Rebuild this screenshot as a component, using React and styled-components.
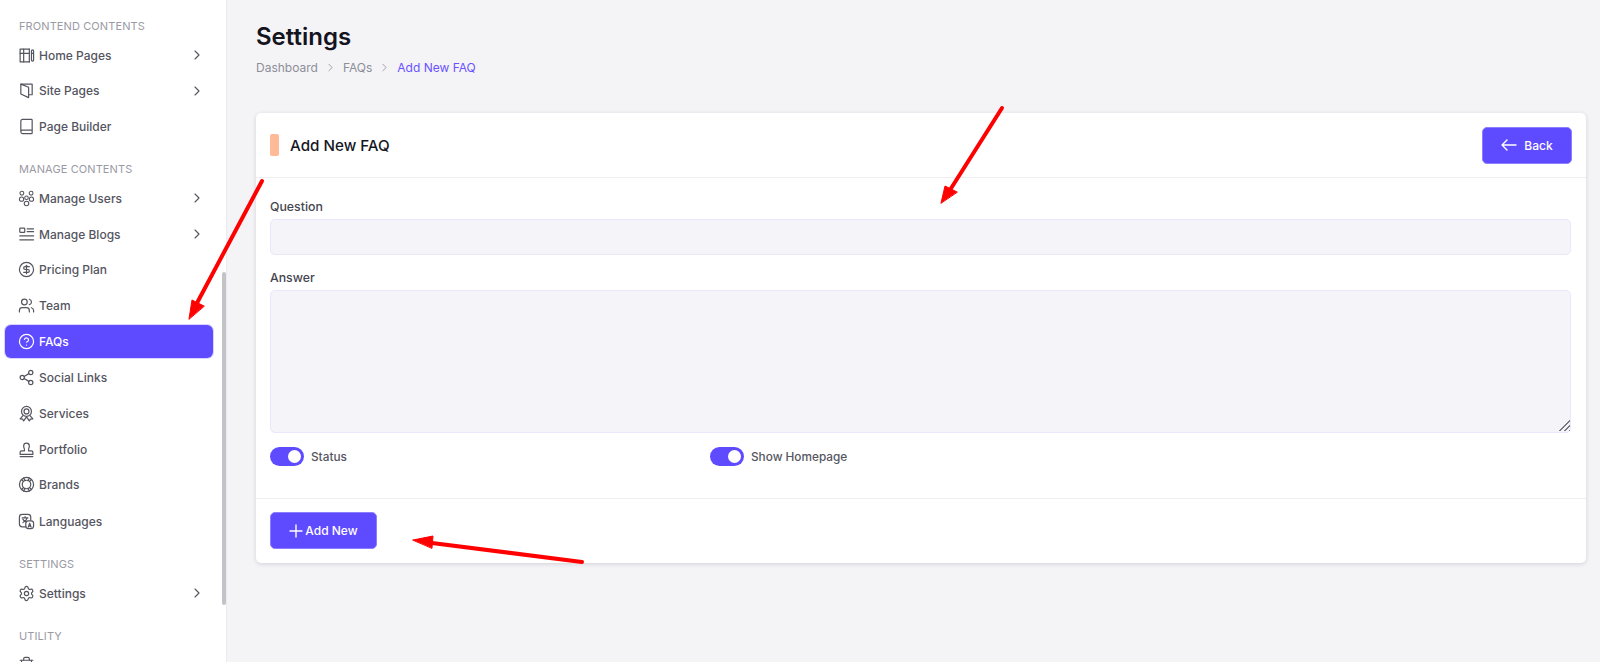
import React from 'react'
import styled, { createGlobalStyle } from 'styled-components'
import {
  ChevronRight, Book, CircleDollarSign, Users, CircleHelp, Share2, Settings as Gear, Trash2
} from 'lucide-react'

const GlobalStyle = createGlobalStyle`
  html, body { margin: 0; height: 100%; }
  body {
    background: #f4f4f7;
    font-family: Inter, "Liberation Sans", sans-serif;
    overflow: hidden;
  }
  * { box-sizing: border-box; }
`

const Page = styled.div`
  position: relative;
  display: flex;
  width: 1600px;
  height: 662px;
  overflow: hidden;
`

const Sidebar = styled.aside`
  position: relative;
  flex: 0 0 227px;
  height: 662px;
  padding: 19px 13px 0 5px;
  background: #fff;
  border-right: 1px solid #eaeaef;
  overflow: hidden;
`

const ScrollThumb = styled.div`
  position: absolute;
  top: 272px;
  right: 0;
  width: 4px;
  height: 333px;
  border-radius: 2px;
  background: #c2c2c9;
`

const SectionTitle = styled.div`
  height: 14px;
  margin: ${props => props.$first ? '0' : '19px'} 0 5.5px 14px;
  font-size: 11px;
  line-height: 14px;
  color: #9a9aa5;
  letter-spacing: 0.1px;
`

const Item = styled.div`
  display: flex;
  align-items: center;
  height: 33px;
  margin-bottom: ${props => props.$loose ? '3.85px' : '2.85px'};
  padding: 0 8px 0 13px;
  border-radius: 6px;
  font-size: 12px;
  font-weight: 500;
  color: ${props => props.$active ? '#fff' : '#55555f'};
  background: ${props => props.$active ? '#5f4bff' : 'transparent'};
  box-shadow: ${props => props.$active ? '0 0 0 1px #d9d4ff' : 'none'};
`

const ItemIcon = styled.span`
  display: flex;
  flex: 0 0 21px;
  svg { display: block; }
`

const ItemLabel = styled.span`
  flex: 1;
`

const Main = styled.main`
  flex: 1;
  padding: 22px 14px 0 29px;
`

const PageTitle = styled.h1`
  margin: 0;
  font-size: 24px;
  line-height: 30px;
  font-weight: 600;
  color: #14141f;
`

const Breadcrumb = styled.nav`
  display: flex;
  align-items: center;
  gap: 6px;
  height: 20px;
  margin-top: 5px;
  font-size: 12px;
  color: #8e8e98;
`

const CrumbCurrent = styled.span`
  color: #6a52ff;
`

const Card = styled.section`
  margin-top: 36px;
  height: 450px;
  display: flex;
  flex-direction: column;
  background: #fff;
  border-radius: 5px;
  box-shadow: 0 1px 4px rgba(30, 30, 50, 0.16);
`

const CardHeader = styled.header`
  display: flex;
  align-items: center;
  height: 65px;
  padding: 0 14px;
  border-bottom: 1px solid #eeeef2;
`

const TitleMark = styled.span`
  width: 9px;
  height: 22px;
  margin-right: 11px;
  border-radius: 2px;
  background: #ffbb98;
`

const CardTitle = styled.h2`
  flex: 1;
  margin: 0;
  font-size: 15.2px;
  font-weight: 500;
  color: #16161f;
`

const Button = styled.button`
  display: flex;
  align-items: center;
  justify-content: center;
  gap: ${props => props.$gap}px;
  width: ${props => props.$width}px;
  height: 37px;
  padding: 0;
  border: 1px solid #8d7dff;
  border-radius: 5px;
  background: #5f4bff;
  color: #fff;
  font: 500 12px Inter, "Liberation Sans", sans-serif;
`

const CardBody = styled.div`
  flex: 1;
  padding: 21px 15px 0 14px;
`

const FieldLabel = styled.label`
  display: block;
  height: 15px;
  margin-bottom: 5px;
  font-size: 12.3px;
  line-height: 15px;
  font-weight: 500;
  color: #45454f;
`

const TextInput = styled.input`
  display: block;
  width: 100%;
  height: 36px;
  margin-bottom: 15px;
  border: 1px solid #e9e7fb;
  border-radius: 5px;
  background: #f5f5f9;
`

const AreaWrap = styled.div`
  position: relative;
  margin-bottom: 14px;
`

const TextArea = styled.textarea`
  display: block;
  width: 100%;
  height: 143px;
  margin: 0;
  border: 1px solid #e9e7fb;
  border-radius: 5px;
  background: #f5f5f9;
  resize: none;
`

const ResizeGrip = styled.span`
  position: absolute;
  right: 1px;
  bottom: 2px;
  width: 13px;
  height: 13px;
  clip-path: polygon(100% 0, 100% 100%, 0 100%);
  background: repeating-linear-gradient(135deg, #77777f 0 1.4px, transparent 1.4px 3.4px);
`

const Toggles = styled.div`
  display: grid;
  grid-template-columns: 440px 1fr;
`

const ToggleRow = styled.div`
  display: flex;
  align-items: center;
  gap: 7px;
  font-size: 11.8px;
  font-weight: 500;
  color: #55555f;
`

const Toggle = styled.span`
  display: flex;
  align-items: center;
  justify-content: flex-end;
  width: 34px;
  height: 19px;
  padding-right: 3px;
  border-radius: 10px;
  background: #5f4bff;
`

const Knob = styled.span`
  width: 13px;
  height: 13px;
  border-radius: 50%;
  background: #fff;
`

const CardFooter = styled.footer`
  height: 65px;
  padding: 13px 14px 0;
  border-top: 1px solid #eeeef2;
`

const Arrows = styled.svg`
  position: absolute;
  top: 0;
  left: 0;
  pointer-events: none;
`

const icon = { width: 17, height: 17, viewBox: '0 0 24 24', fill: 'none', stroke: 'currentColor', strokeWidth: 1.7, strokeLinecap: 'round', strokeLinejoin: 'round' }

const HomePagesIcon = () => (
  <svg {...icon}>
    <path d="M16 3H3v18h13" />
    <path d="M8 3v18M3 9h5M8 9h8" />
    <path d="M16 3v18" />
    <path d="M19 9V5.500a1.500 1.500 0 0 1 3 0V9M19 9h3v9.500a1.500 1.500 0 0 1-3 0z" />
  </svg>
)

const SitePagesIcon = () => (
  <svg {...icon}>
    <path d="M4 3h16v15h-5" />
    <path d="M4 3v14l11 5V7.500L4 3z" />
  </svg>
)

const UsersTreeIcon = () => (
  <svg {...icon} strokeWidth={1.5}>
    <circle cx="5.500" cy="4.500" r="2.700" />
    <circle cx="18.500" cy="4.500" r="2.700" />
    <circle cx="5" cy="13" r="3" />
    <circle cx="19" cy="13" r="3" />
    <circle cx="12" cy="11" r="2.500" />
    <circle cx="12" cy="19" r="3.200" />
  </svg>
)

const BlogsIcon = () => (
  <svg {...icon}>
    <rect x="2.500" y="3" width="7" height="6" rx="1" />
    <path d="M13 4h9M13 8h9M2.500 14h19.500M2.500 19.500h19.500" />
  </svg>
)

const ServicesIcon = () => (
  <svg {...icon}>
    <circle cx="12" cy="9" r="7" />
    <circle cx="12" cy="9" r="3.500" />
    <path d="M7 15l-4 4.500 3.500.5L8 22.500l3.500-5M17 15l4 4.500-3.500.5-1.500 2.500-3.500-5" />
  </svg>
)

const PortfolioIcon = () => (
  <svg {...icon}>
    <path d="M3 19h18v-3a2 2 0 0 0-2-2h-4c-1-2 1-4 1-7a4 4 0 0 0-8 0c0 3 2 5 1 7H5a2 2 0 0 0-2 2z" />
    <path d="M3 22h18" />
  </svg>
)

const BrandsIcon = () => (
  <svg {...icon}>
    <circle cx="12" cy="12" r="10" />
    <circle cx="12" cy="12" r="6" />
    <path d="M5 5l3 3M19 5l-3 3M5 19l3-3M19 19l-3-3" />
    <path d="M8 3l2 3.500M16 3l-2 3.500M8 21l2-3.500M16 21l-2-3.500" />
  </svg>
)

const LanguagesIcon = () => (
  <svg {...icon}>
    <path d="M11 19.500H6a4 4 0 0 1-4-4V6a4 4 0 0 1 4-4h8a4 4 0 0 1 4 4v4" />
    <path d="M6 7h8M10 5v2M13 7c-1 3.500-3.500 5.500-6 6.500M7 9c1 2 2.500 3 4.500 3.500" />
    <rect x="11" y="11" width="11" height="11" rx="3.500" />
    <path d="M14.500 20l2-5.500 2 5.500M15.200 18.500h2.600" />
  </svg>
)

const BackArrow = () => (
  <svg width='16' height='12' viewBox='0 0 16 12' fill='none' stroke='currentColor' strokeWidth='1.4' strokeLinecap='round' strokeLinejoin='round'>
    <path d='M1 6h14M6 1L1 6l5 5' />
  </svg>
)

const PlusMark = () => (
  <svg width='14' height='14' viewBox='0 0 14 14' fill='none' stroke='currentColor' strokeWidth='1.4' strokeLinecap='round'>
    <path d='M7 1v12M1 7h12' />
  </svg>
)

const lucide = Comp => () => <Comp size={17} strokeWidth={1.7} />

const sections = [
  {
    title: 'FRONTEND CONTENTS',
    items: [
      { label: 'Home Pages', Icon: HomePagesIcon, more: true },
      { label: 'Site Pages', Icon: SitePagesIcon, more: true },
      { label: 'Page Builder', Icon: lucide(Book) }
    ]
  },
  {
    title: 'MANAGE CONTENTS',
    items: [
      { label: 'Manage Users', Icon: UsersTreeIcon, more: true },
      { label: 'Manage Blogs', Icon: BlogsIcon, more: true },
      { label: 'Pricing Plan', Icon: lucide(CircleDollarSign) },
      { label: 'Team', Icon: lucide(Users) },
      { label: 'FAQs', Icon: lucide(CircleHelp), active: true },
      { label: 'Social Links', Icon: lucide(Share2) },
      { label: 'Services', Icon: ServicesIcon },
      { label: 'Portfolio', Icon: PortfolioIcon },
      { label: 'Brands', Icon: BrandsIcon, loose: true },
      { label: 'Languages', Icon: LanguagesIcon }
    ]
  },
  {
    title: 'SETTINGS',
    items: [{ label: 'Settings', Icon: lucide(Gear), more: true }]
  },
  {
    title: 'UTILITY',
    items: [{ label: '', Icon: lucide(Trash2) }]
  }
]

const SwitchField = ({ label }) => (
  <ToggleRow>
    <Toggle><Knob /></Toggle>
    {label}
  </ToggleRow>
)

export default function App () {
  return (
    <Page>
      <GlobalStyle />
      <Sidebar>
        {sections.map((section, i) => (
          <div key={section.title}>
            <SectionTitle $first={i === 0}>{section.title}</SectionTitle>
            {section.items.map(({ label, Icon, more, active, loose }) => (
              <Item key={label} $active={active} $loose={loose}>
                <ItemIcon><Icon /></ItemIcon>
                <ItemLabel>{label}</ItemLabel>
                {more && <ChevronRight size={16} strokeWidth={1.7} />}
              </Item>
            ))}
          </div>
        ))}
        <ScrollThumb />
      </Sidebar>
      <Main>
        <PageTitle>Settings</PageTitle>
        <Breadcrumb>
          <span>Dashboard</span>
          <ChevronRight size={13} strokeWidth={1.5} />
          <span>FAQs</span>
          <ChevronRight size={13} strokeWidth={1.5} />
          <CrumbCurrent>Add New FAQ</CrumbCurrent>
        </Breadcrumb>
        <Card>
          <CardHeader>
            <TitleMark />
            <CardTitle>Add New FAQ</CardTitle>
            <Button $width={90} $gap={7}><BackArrow />Back</Button>
          </CardHeader>
          <CardBody>
            <FieldLabel>Question</FieldLabel>
            <TextInput />
            <FieldLabel>Answer</FieldLabel>
            <AreaWrap>
              <TextArea />
              <ResizeGrip />
            </AreaWrap>
            <Toggles>
              <SwitchField label='Status' />
              <SwitchField label='Show Homepage' />
            </Toggles>
          </CardBody>
          <CardFooter>
            <Button $width={107} $gap={2}><PlusMark />Add New</Button>
          </CardFooter>
        </Card>
      </Main>
      <Arrows width='1600' height='662'>
        <g fill='#ff0000' stroke='#ff0000' strokeLinecap='round'>
          <line x1='1002' y1='108' x2='950' y2='190' strokeWidth='4' fill='none' />
          <polygon points='941,203 945,186 957,192' strokeWidth='1' />
          <line x1='262' y1='181' x2='197' y2='303' strokeWidth='4' fill='none' />
          <polygon points='189,319 192,300 204,306' strokeWidth='1' />
          <line x1='582' y1='562' x2='432' y2='543' strokeWidth='4' fill='none' />
          <polygon points='413,540 433,536 432,548' strokeWidth='1' />
        </g>
      </Arrows>
    </Page>
  )
}
